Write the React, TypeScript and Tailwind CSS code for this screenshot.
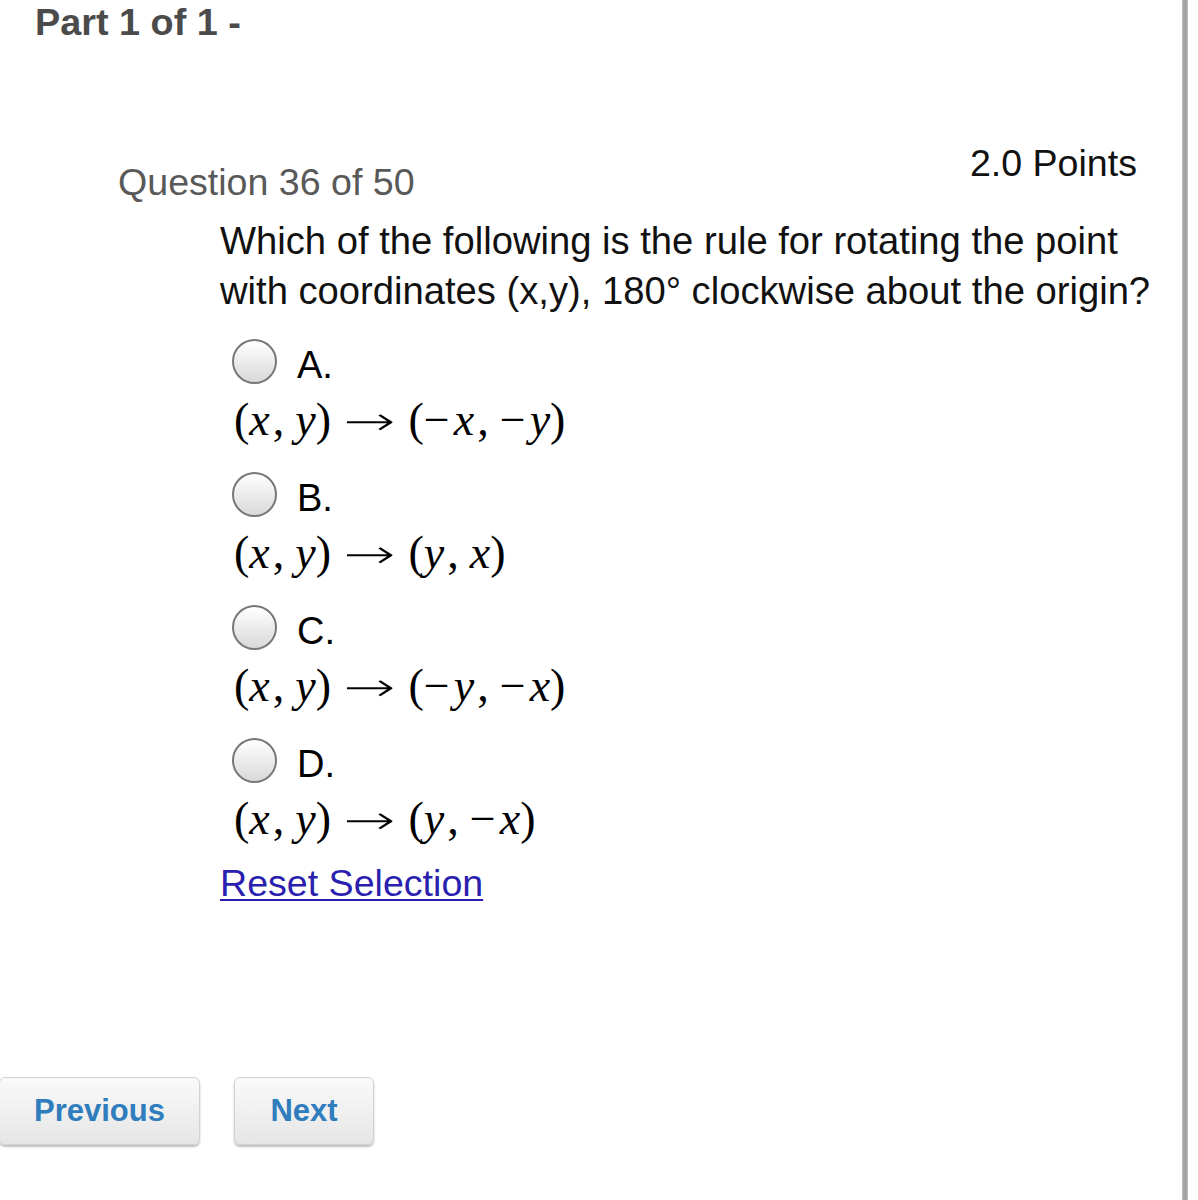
import React from "react";

const Math = ({ children }: { children: React.ReactNode }) => (
  <div
    className="h-[60px] leading-[60px] text-[46px] text-black whitespace-nowrap ml-[14px]"
    style={{ fontFamily: '"Liberation Serif", "DejaVu Serif", serif' }}
  >
    {children}
  </div>
);

const V = ({ c }: { c: string }) => <span className="italic">{c}</span>;
const P = ({ c }: { c: string }) => <span>{c}</span>;
const Comma = () => <span className="ml-[3px] mr-[11px]">,</span>;
const Arrow = () => (
  <span
    className="inline-block mx-[22px] text-[40px] scale-x-[1.55] font-light"
    style={{ fontFamily: '"DejaVu Sans", sans-serif' }}
  >
    →
  </span>
);
const Minus = () => <span className="mr-[4px]">−</span>;

const Radio = () => (
  <div className="w-[45px] h-[45px] rounded-full border-2 border-[#787878] bg-gradient-to-b from-[#ffffff] to-[#d9d9d9] shadow-[inset_0_1px_1px_rgba(255,255,255,0.9)]" />
);

const Option = ({ label, math }: { label: string; math: React.ReactNode }) => (
  <div className="flex flex-col">
    <div className="h-[50px] flex items-center pl-[12px]">
      <Radio />
      <span className="ml-[20px] leading-[42px] text-[38px] text-black mt-[8px]">{label}</span>
    </div>
    <div className="mt-[4px]">
      <Math>{math}</Math>
    </div>
  </div>
);

const Btn = ({ children, w }: { children: React.ReactNode; w: string }) => (
  <div
    className={`${w} h-[68px] rounded-[6px] border border-[#d2d2d2] bg-gradient-to-b from-[#fafafa] to-[#e6e6e6] shadow-[0_2px_2px_rgba(0,0,0,0.25)] flex items-center justify-center text-[31px] font-bold text-[#2f7dbd]`}
  >
    {children}
  </div>
);

export default function App() {
  return (
    <div
      className="w-[1198px] h-[1200px] bg-white flex overflow-hidden"
      style={{ fontFamily: '"Liberation Sans", Arial, sans-serif' }}
    >
      <div className="w-[1182px] flex flex-col">
        <div className="pt-[1px] pl-[35px] leading-[42px] text-[37.8px] font-bold text-[#4b4b4b]">
          Part 1 of 1 -
        </div>

        <div className="mt-[99px] flex justify-between items-start pr-[45px]">
          <div className="pl-[118px] mt-[19px] leading-[42px] text-[37.6px] text-[#595959]">
            Question 36 of 50
          </div>
          <div className="leading-[42px] text-[37.6px] text-[#111]">2.0 Points</div>
        </div>

        <div className="pl-[220px] flex flex-col">
          <div className="mt-[13px] w-[950px] leading-[50px] text-[38.2px] text-[#111]">
            Which of the following is the rule for rotating the point with coordinates (x,y), 180° clockwise about the origin?
          </div>

          <div className="mt-[20px] flex flex-col gap-[19px]">
            <Option
              label="A."
              math={
                <>
                  <P c="(" />
                  <V c="x" />
                  <Comma />
                  <V c="y" />
                  <P c=")" />
                  <Arrow />
                  <P c="(" />
                  <Minus />
                  <V c="x" />
                  <Comma />
                  <Minus />
                  <V c="y" />
                  <P c=")" />
                </>
              }
            />
            <Option
              label="B."
              math={
                <>
                  <P c="(" />
                  <V c="x" />
                  <Comma />
                  <V c="y" />
                  <P c=")" />
                  <Arrow />
                  <P c="(" />
                  <V c="y" />
                  <Comma />
                  <V c="x" />
                  <P c=")" />
                </>
              }
            />
            <Option
              label="C."
              math={
                <>
                  <P c="(" />
                  <V c="x" />
                  <Comma />
                  <V c="y" />
                  <P c=")" />
                  <Arrow />
                  <P c="(" />
                  <Minus />
                  <V c="y" />
                  <Comma />
                  <Minus />
                  <V c="x" />
                  <P c=")" />
                </>
              }
            />
            <Option
              label="D."
              math={
                <>
                  <P c="(" />
                  <V c="x" />
                  <Comma />
                  <V c="y" />
                  <P c=")" />
                  <Arrow />
                  <P c="(" />
                  <V c="y" />
                  <Comma />
                  <Minus />
                  <V c="x" />
                  <P c=")" />
                </>
              }
            />
          </div>

          <div className="mt-[13px] leading-[42px] text-[37.6px]">
            <a href="#" className="text-[#2a1fae] underline decoration-[2px] underline-offset-[3px]">
              Reset Selection
            </a>
          </div>
        </div>

        <div className="mt-[173px] flex gap-[34px]">
          <Btn w="w-[201px] -ml-[1px]">Previous</Btn>
          <Btn w="w-[140px]">Next</Btn>
        </div>
      </div>
      <div className="w-[6px] h-full bg-[#a4a4a4] border-x border-[#bdbdbd]" />
      <div className="flex-1" />
    </div>
  );
}
